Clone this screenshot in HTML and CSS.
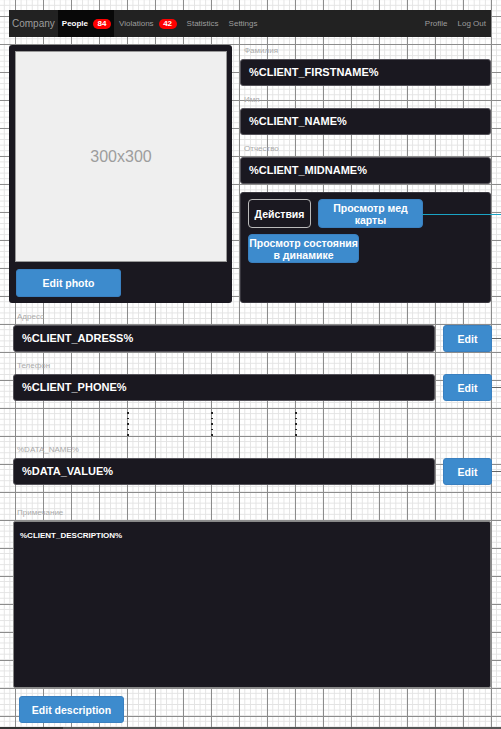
FILE: index.html
```html
<!DOCTYPE html>
<html lang="ru">
<head>
    <meta charset="UTF-8">
    <meta name="viewport" content="width=device-width, initial-scale=1.0">
    <title>Client card</title>
    <link rel="stylesheet" href="styles.css">
</head>
<body>
    <!-- Top navigation -->
    <nav class="navbar">
        <span class="brand">Company</span>
        <a class="nav-link active" href="#">People <span class="badge">84</span></a>
        <a class="nav-link" href="#">Violations <span class="badge">42</span></a>
        <a class="nav-link" href="#">Statistics</a>
        <a class="nav-link" href="#">Settings</a>
        <span class="nav-spacer"></span>
        <a class="nav-link" href="#">Profile</a>
        <a class="nav-link" href="#">Log Out</a>
    </nav>

    <div class="top">
        <!-- Photo -->
        <div class="card photo-card">
            <div class="photo">300x300</div>
            <button class="btn btn-primary btn-photo">Edit photo</button>
        </div>

        <!-- Name fields and actions -->
        <div class="name-col">
            <div class="group">
                <label class="field-label">Фамилия</label>
                <div class="field">%CLIENT_FIRSTNAME%</div>
            </div>
            <div class="group">
                <label class="field-label">Имя</label>
                <div class="field">%CLIENT_NAME%</div>
            </div>
            <div class="group">
                <label class="field-label">Отчество</label>
                <div class="field">%CLIENT_MIDNAME%</div>
            </div>
            <div class="card actions-card">
                <div class="actions-row">
                    <button class="btn btn-outline">Действия</button>
                    <button class="btn btn-primary btn-action btn-linked">Просмотр мед<br>карты</button>
                </div>
                <div class="actions-row">
                    <button class="btn btn-primary btn-action btn-wide">Просмотр состояния<br>в динамике</button>
                </div>
            </div>
        </div>
    </div>

    <div class="fields">
        <div class="group">
            <label class="field-label">Адресс</label>
            <div class="row">
                <div class="field field-wide">%CLIENT_ADRESS%</div>
                <button class="btn btn-primary btn-edit">Edit</button>
                <span class="connector"></span>
            </div>
        </div>
        <div class="group">
            <label class="field-label">Телефон</label>
            <div class="row">
                <div class="field field-wide">%CLIENT_PHONE%</div>
                <button class="btn btn-primary btn-edit">Edit</button>
                <span class="connector"></span>
            </div>
        </div>

        <div class="dots">
            <span class="dot-col"></span>
            <span class="dot-col"></span>
            <span class="dot-col"></span>
        </div>

        <div class="group data-group">
            <label class="field-label">%DATA_NAME%</label>
            <div class="row">
                <div class="field field-wide">%DATA_VALUE%</div>
                <button class="btn btn-primary btn-edit">Edit</button>
                <span class="connector"></span>
            </div>
        </div>

        <div class="group note-group">
            <label class="field-label">Примечание</label>
            <div class="note">%CLIENT_DESCRIPTION%</div>
            <button class="btn btn-primary btn-desc">Edit description</button>
        </div>
    </div>

    <div class="bottom-bar"></div>
</body>
</html>
```

FILE: styles.css
```css
body {
    font-family: "Liberation Sans", Arial, sans-serif;
    margin: 0;
    padding: 0;
    min-height: 100vh;
    overflow: hidden;
    color: #fff;
    background-color: #fff;
    background-image:
        linear-gradient(#8c8c8c 1px, transparent 1px),
        linear-gradient(90deg, #8c8c8c 1px, transparent 1px),
        linear-gradient(#e3e3e3 1px, transparent 1px),
        linear-gradient(90deg, #e3e3e3 1px, transparent 1px);
    background-size: 28px 28px, 28px 28px, 5.6px 5.6px, 5.6px 5.6px;
    background-position: 15px 16px, 15px 16px, 15px 16px, 15px 16px;
}

/* navbar */
.navbar {
    display: flex;
    align-items: stretch;
    width: 482px;
    height: 27px;
    margin: 10px 0 0 9px;
    background: #222;
}

.brand {
    color: #9d9d9d;
    font-size: 10px;
    line-height: 27px;
    padding: 0 3px 0 3px;
}

.nav-link {
    display: flex;
    align-items: center;
    color: #9d9d9d;
    font-size: 8px;
    text-decoration: none;
    padding: 0 5px;
}

.nav-link.active {
    background: #080808;
    color: #fff;
    font-weight: bold;
    padding: 0 3px 0 4px;
}

.badge {
    display: inline-block;
    margin-left: 5px;
    min-width: 10px;
    padding: 0 4px;
    height: 10px;
    line-height: 10px;
    border-radius: 5px;
    background: #f00;
    color: #fff;
    font-weight: bold;
    font-size: 8px;
    text-align: center;
}

.nav-spacer {
    flex: 1;
}

/* cards */
.top {
    display: flex;
    gap: 8px;
    margin: 8px 0 0 9px;
}

.card {
    background: #1a1820;
    border-radius: 3px;
}

.photo-card {
    width: 223px;
    box-sizing: border-box;
    padding: 6px 5px 6px 6px;
}

.photo {
    box-sizing: border-box;
    width: 212px;
    height: 211px;
    background: #efefef;
    border: 1px solid #999;
    color: #9d9d9d;
    font-size: 16px;
    display: flex;
    align-items: center;
    justify-content: center;
}

.btn {
    font-family: "Liberation Sans", Arial, sans-serif;
    font-weight: bold;
    color: #fff;
    cursor: pointer;
    border-radius: 3px;
    padding: 0;
}

.btn-primary {
    background: #3d8bcd;
    border: 1px solid #3a80c0;
}

.btn-photo {
    display: block;
    width: 105px;
    height: 28px;
    margin: 7px 0 0 1px;
    font-size: 10.5px;
}

.name-col {
    width: 251px;
    display: flex;
    flex-direction: column;
}

.group + .group,
.group.data-group {
    margin-top: 8px;
}

.field-label {
    display: block;
    height: 14px;
    line-height: 12px;
    padding-left: 4px;
    color: #aaa;
    font-size: 8px;
}

.field {
    box-sizing: border-box;
    height: 27px;
    line-height: 25px;
    padding-left: 8px;
    background: #1a1820;
    border: 1px solid #55535a;
    border-radius: 3px;
    font-size: 11px;
    font-weight: bold;
}

.actions-card {
    margin-top: 8px;
    height: 111px;
    box-sizing: border-box;
    padding: 6px 7px;
    border: 1px solid #3a3840;
}

.actions-row {
    display: flex;
    gap: 7px;
}

.actions-row + .actions-row {
    margin-top: 6px;
}

.btn-outline {
    background: transparent;
    border: 1px solid #bbb;
    border-radius: 4px;
    width: 63px;
    height: 29px;
    font-size: 10.5px;
}

.btn-action {
    width: 105px;
    height: 29px;
    font-size: 10.5px;
    line-height: 12px;
    border-radius: 4px;
}

.btn-wide {
    width: 111px;
}

.btn-linked {
    position: relative;
}

.btn-linked::after {
    content: "";
    position: absolute;
    left: 100%;
    top: 50%;
    width: 90px;
    height: 1px;
    background: #1aa3c4;
}

/* lower fields */
.fields {
    margin: 8px 0 0 13px;
}

.row {
    display: flex;
    align-items: center;
    gap: 8px;
}

.field-wide {
    flex: 0 0 422px;
}

.btn-edit {
    flex: 0 0 49px;
    height: 27px;
    font-size: 10.5px;
}

.connector {
    flex: 1;
    height: 1px;
    margin-left: -8px;
    background: #666;
}

.dots {
    display: flex;
    height: 35px;
    box-sizing: border-box;
    padding: 11px 0 0 114px;
    gap: 82px;
}

.dot-col {
    width: 2px;
    height: 25px;
    background: repeating-linear-gradient(to bottom, #222 0, #222 1.5px, transparent 1.5px, transparent 5.5px);
}

.group.note-group {
    margin-top: 22px;
}

.note {
    box-sizing: border-box;
    width: 478px;
    height: 167px;
    padding: 9px 6px;
    background: #1a1820;
    border: 1px solid #888;
    border-radius: 2px;
    font-size: 8px;
    font-weight: bold;
}

.btn-desc {
    display: block;
    width: 105px;
    height: 27px;
    margin: 8px 0 0 6px;
    font-size: 10.5px;
}

.bottom-bar {
    margin-top: 4px;
    height: 2px;
    background: linear-gradient(90deg, #333 63px, #555 63px);
}
```
